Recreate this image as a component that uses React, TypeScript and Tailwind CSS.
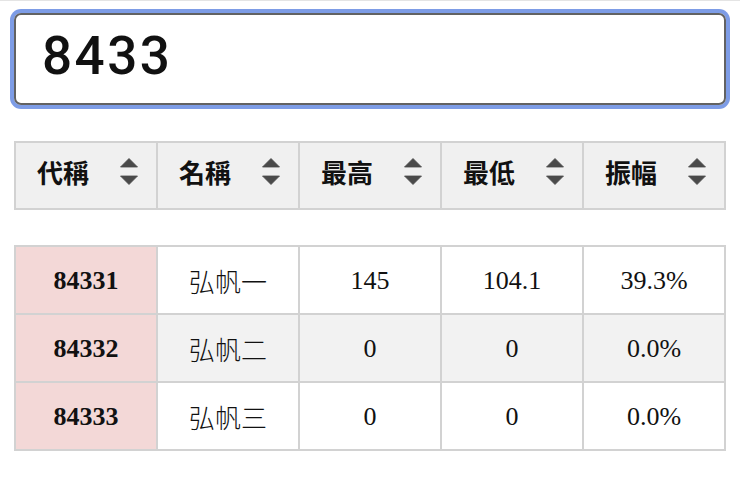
const columns = ["代稱", "名稱", "最高", "最低", "振幅"];

const rows = [
  { code: "84331", name: "弘帆一", high: "145", low: "104.1", amp: "39.3%" },
  { code: "84332", name: "弘帆二", high: "0", low: "0", amp: "0.0%" },
  { code: "84333", name: "弘帆三", high: "0", low: "0", amp: "0.0%" },
];

function SortIcon() {
  return (
    <svg width="18" height="27" viewBox="0 0 18 27" className="shrink-0 block">
      <path d="M9 0.5 L17.5 9 L0.5 9 Z" fill="#4a4a4a" strokeLinejoin="round" stroke="#4a4a4a" strokeWidth="0.8" />
      <path d="M0.5 18 L17.5 18 L9 26.5 Z" fill="#4a4a4a" strokeLinejoin="round" stroke="#4a4a4a" strokeWidth="0.8" />
    </svg>
  );
}

const sans = "font-['Roboto','Liberation_Sans',sans-serif]";
const cjk = "font-['Noto_Sans_CJK_TC',sans-serif]";
const serif = "font-['Liberation_Serif','Noto_Sans_CJK_TC',serif]";

export default function App() {
  return (
    <div className="w-[740px] h-[483px] bg-white border-t border-[#e4e4e4] px-[14px] pt-[12px] text-[#111]">
      <div
        className={`h-[92px] rounded-[7px] border-2 border-[#626262] ring-4 ring-[#7d9ce6] flex items-center pl-[26px] pb-[5px] text-[53px] font-medium tracking-[2.5px] ${sans}`}
      >
        8433
      </div>

      <table className="mt-[36px] w-full table-fixed border-collapse">
        <thead>
          <tr>
            {columns.map((c) => (
              <th key={c} className="h-[67px] bg-[#f0f0f0] border-2 border-[#d2d2d2] p-0 font-normal align-middle">
                <div className="flex items-center justify-between pl-[21px] pr-[18px] pb-[8px] leading-none">
                  <span className={`text-[26px] font-bold leading-none ${cjk}`}>{c}</span>
                  <SortIcon />
                </div>
              </th>
            ))}
          </tr>
        </thead>
      </table>

      <table className="mt-[35px] w-full table-fixed border-collapse">
        <tbody>
          {rows.map((r, i) => (
            <tr key={r.code} className={i % 2 === 1 ? "bg-[#f2f2f2]" : "bg-white"}>
              <td className={`h-[68px] border-2 border-[#d2d2d2] bg-[#f3d8d7] text-center text-[26px] font-bold ${serif}`}>
                {r.code}
              </td>
              <td className={`h-[68px] border-2 border-[#d2d2d2] text-center text-[26px] font-light ${cjk}`}>
                {r.name}
              </td>
              <td className={`h-[68px] border-2 border-[#d2d2d2] text-center text-[26px] ${serif}`}>{r.high}</td>
              <td className={`h-[68px] border-2 border-[#d2d2d2] text-center text-[26px] ${serif}`}>{r.low}</td>
              <td className={`h-[68px] border-2 border-[#d2d2d2] text-center text-[26px] ${serif}`}>{r.amp}</td>
            </tr>
          ))}
        </tbody>
      </table>
    </div>
  );
}
